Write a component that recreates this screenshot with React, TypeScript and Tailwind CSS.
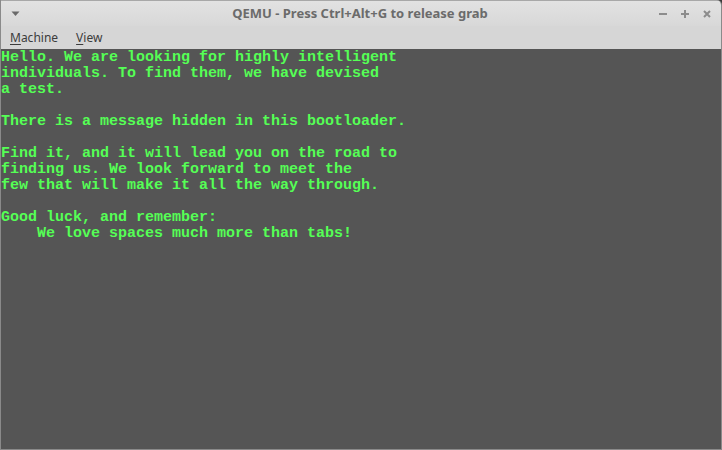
import React from "react";

const lines = [
  "Hello. We are looking for highly intelligent",
  "individuals. To find them, we have devised",
  "a test.",
  "",
  "There is a message hidden in this bootloader.",
  "",
  "Find it, and it will lead you on the road to",
  "finding us. We look forward to meet the",
  "few that will make it all the way through.",
  "",
  "Good luck, and remember:",
  "    We love spaces much more than tabs!",
];

export default function App() {
  return (
    <div className="w-[722px] h-[450px] overflow-hidden bg-[#3a3a3a]">
      <div className="w-[722px] h-[450px] flex flex-col rounded-tr-[5px] overflow-hidden border-x border-b border-[#8a8a8a]">
        <div className="h-[26px] shrink-0 relative flex items-center justify-center bg-gradient-to-b from-[#e2e2e2] to-[#d8d8d8] border-t border-[#a8a8a8]">
          <svg className="absolute left-[10px] top-[10px]" width="9" height="6" viewBox="0 0 9 6">
            <path d="M0.5 0.5 H8.5 L4.5 5 Z" fill="#6a6a6a" />
          </svg>
          <span className="text-[13px] font-bold text-[#6b6b6b] leading-none ml-[-2px]" style={{ fontFamily: '"Noto Sans", sans-serif' }}>
            QEMU - Press Ctrl+Alt+G to release grab
          </span>
          <div className="absolute right-[10px] top-[9px] flex items-center gap-[14px]">
            <svg width="8" height="8" viewBox="0 0 8 8">
              <rect x="0" y="3" width="8" height="2" fill="#8c8c8c" />
            </svg>
            <svg width="8" height="8" viewBox="0 0 8 8">
              <rect x="0" y="3" width="8" height="2" fill="#8c8c8c" />
              <rect x="3" y="0" width="2" height="8" fill="#8c8c8c" />
            </svg>
            <svg width="8" height="8" viewBox="0 0 8 8">
              <path d="M1 1 L7 7 M7 1 L1 7" stroke="#8c8c8c" strokeWidth="2" />
            </svg>
          </div>
        </div>
        <div className="h-[23px] shrink-0 flex items-center bg-[#d6d6d6] text-[12px] text-[#3c3c3c] pl-[9px] gap-[18px]" style={{ fontFamily: '"Noto Sans", sans-serif' }}>
          <span><span className="underline underline-offset-[2px]">M</span>achine</span>
          <span><span className="underline underline-offset-[2px]">V</span>iew</span>
        </div>
        <div className="flex-1 bg-[#555555] pt-[1px]">
          <pre
            className="m-0 text-[15px] leading-[16px] text-[#55ff55] font-bold whitespace-pre"
            style={{ fontFamily: '"Liberation Mono", monospace' }}
          >
            {lines.join("\n")}
          </pre>
        </div>
      </div>
    </div>
  );
}
